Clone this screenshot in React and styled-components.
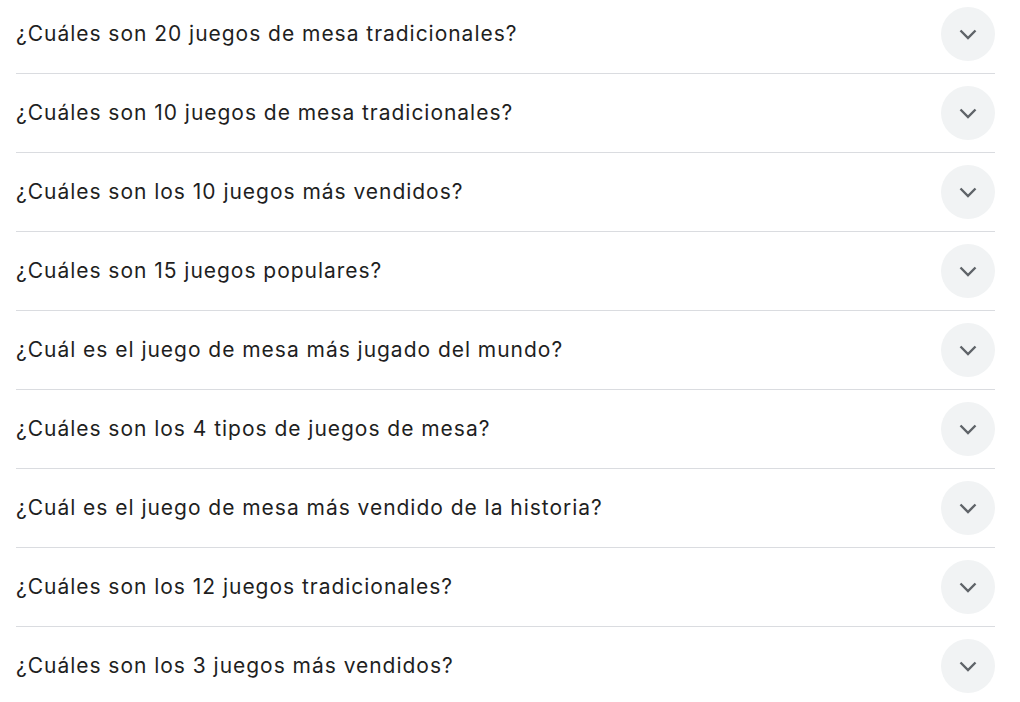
import React from "react";
import styled, { createGlobalStyle } from "styled-components";

const questions = [
  "¿Cuáles son 20 juegos de mesa tradicionales?",
  "¿Cuáles son 10 juegos de mesa tradicionales?",
  "¿Cuáles son los 10 juegos más vendidos?",
  "¿Cuáles son 15 juegos populares?",
  "¿Cuál es el juego de mesa más jugado del mundo?",
  "¿Cuáles son los 4 tipos de juegos de mesa?",
  "¿Cuál es el juego de mesa más vendido de la historia?",
  "¿Cuáles son los 12 juegos tradicionales?",
  "¿Cuáles son los 3 juegos más vendidos?",
];

function Chevron() {
  return (
    <svg width="24" height="24" viewBox="0 0 24 24" aria-hidden="true">
      <polyline
        points="4.5,8.5 12,16 19.5,8.5"
        fill="none"
        stroke="#5f6368"
        strokeWidth="2.4"
      />
    </svg>
  );
}

function App() {
  return (
    <>
      <GlobalStyle />
      <List>
        {questions.map((q, i) => (
          <Row key={i} $first={i === 0} $last={i === questions.length - 1}>
            <Question>{q}</Question>
            <ToggleButton type="button" aria-label="Expandir">
              <Chevron />
            </ToggleButton>
          </Row>
        ))}
      </List>
    </>
  );
}

export default App;

const GlobalStyle = createGlobalStyle`
  body {
    margin: 0;
    background: #ffffff;
    font-family: Inter, Roboto, "Liberation Sans", Arial, sans-serif;
  }
`;

const List = styled.div`
  width: 979px;
  margin-left: 16px;
`;

const Row = styled.div`
  display: flex;
  align-items: center;
  justify-content: space-between;
  padding: ${(p) => (p.$first ? "7px" : "12px")} 0 12px;
  border-bottom: ${(p) => (p.$last ? "none" : "1px solid #dadce0")};
`;

const Question = styled.div`
  font-size: 21px;
  line-height: 28px;
  letter-spacing: 0.97px;
  color: #1f1f1f;
`;

const ToggleButton = styled.button`
  width: 54px;
  height: 54px;
  flex-shrink: 0;
  border: none;
  border-radius: 50%;
  background: #f1f3f4;
  display: flex;
  align-items: center;
  justify-content: center;
  padding: 0;
  cursor: pointer;
`;
